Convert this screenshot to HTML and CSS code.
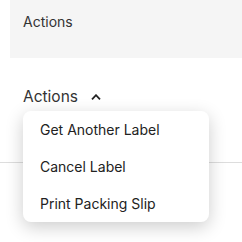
FILE: index.html
```html
<!DOCTYPE html>
<html>
<head>
<meta charset="utf-8">
<link rel="stylesheet" href="styles.css">
</head>
<body>
<div class="header-box"><span class="header-label">Actions</span></div>
<div class="section">
  <div class="menu-wrap">
    <button class="toggle">Actions
      <svg class="chev" width="10" height="6" viewBox="0 0 10 6"><path d="M1 5.3 L5 1.2 L9 5.3" fill="none" stroke="#222" stroke-width="1.8"/></svg>
    </button>
    <ul class="menu">
      <li class="item">Get Another Label</li>
      <li class="item">Cancel Label</li>
      <li class="item">Print Packing Slip</li>
    </ul>
  </div>
</div>
</body>
</html>
```
FILE: styles.css
```css
html, body {
  margin: 0;
  padding: 0;
  background: #fff;
  font-family: Inter, "Liberation Sans", sans-serif;
  color: #222;
}
body {
  min-height: 242px;
}
.header-box {
  margin-left: 10px;
  height: 58px;
  background: #f5f5f5;
  padding: 11px 0 0 13px;
  box-sizing: border-box;
}
.header-label {
  font-size: 14px;
  line-height: 16px;
  color: #333;
}
.section {
  height: 105px;
  border-bottom: 1px solid #ddd;
  padding: 30px 0 0 23px;
  box-sizing: border-box;
}
.menu-wrap {
  position: relative;
}
.toggle {
  display: flex;
  align-items: center;
  gap: 13px;
  border: 0;
  background: none;
  padding: 0;
  font-family: inherit;
  font-size: 15.5px;
  line-height: 18px;
  color: #333;
}
.chev {
  margin-top: 0;
}
.menu {
  position: absolute;
  left: 0;
  top: 23px;
  width: 186px;
  margin: 0;
  padding: 0;
  list-style: none;
  background: #fff;
  border-radius: 8px;
  box-shadow: 0 5px 18px rgba(0,0,0,0.2);
  z-index: 2;
}
.item {
  padding: 10px 17px;
  font-size: 14px;
  line-height: 17px;
  color: #222;
}
```
